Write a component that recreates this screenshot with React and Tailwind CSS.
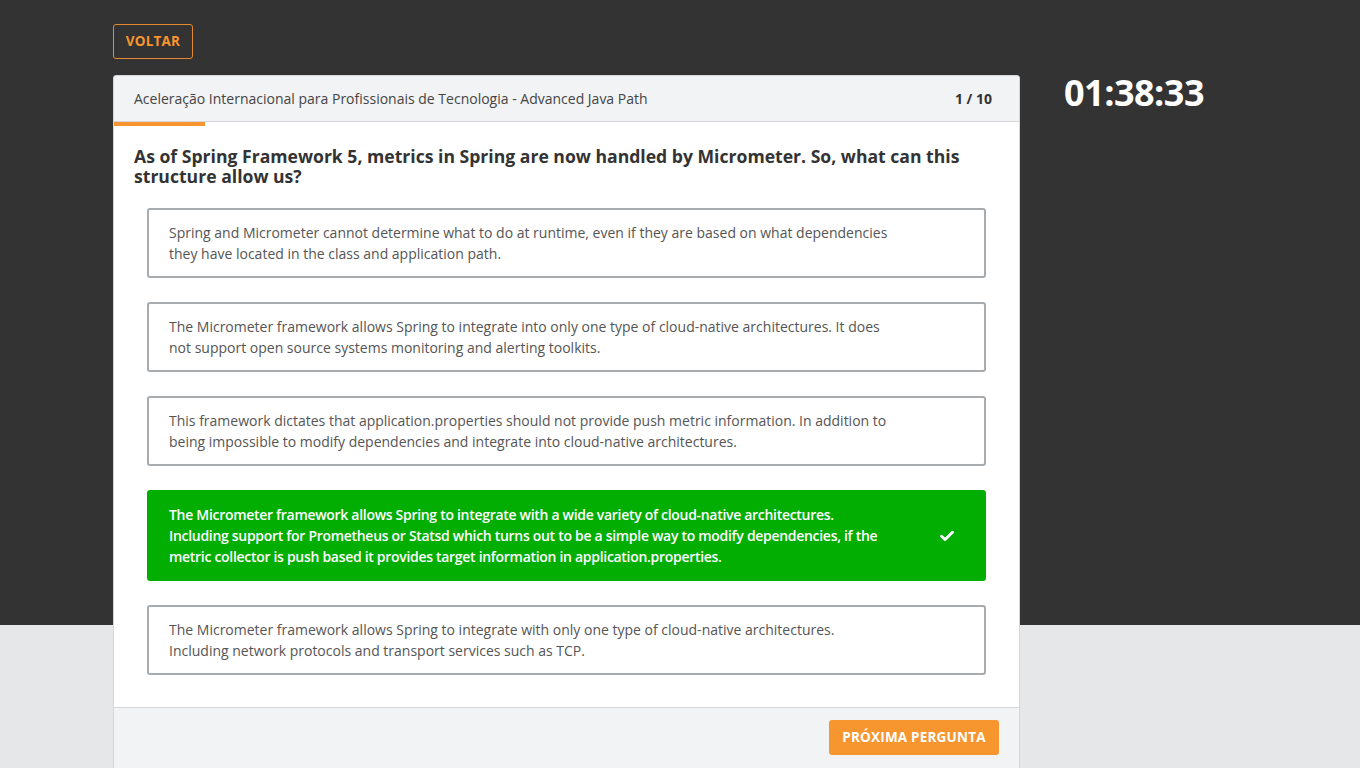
import React from "react";

const options = [
  {
    lines: [
      "Spring and Micrometer cannot determine what to do at runtime, even if they are based on what dependencies they have located in the class and application path.",
    ],
  },
  {
    lines: [
      "The Micrometer framework allows Spring to integrate into only one type of cloud-native architectures. It does not support open source systems monitoring and alerting toolkits.",
    ],
  },
  {
    lines: [
      "This framework dictates that application.properties should not provide push metric information. In addition to being impossible to modify dependencies and integrate into cloud-native architectures.",
    ],
  },
  {
    lines: [
      "The Micrometer framework allows Spring to integrate with a wide variety of cloud-native architectures.",
      "Including support for Prometheus or Statsd which turns out to be a simple way to modify dependencies, if the",
      "metric collector is push based it provides target information in application.properties.",
    ],
    correct: true,
  },
  {
    lines: [
      "The Micrometer framework allows Spring to integrate with only one type of cloud-native architectures. Including network protocols and transport services such as TCP.",
    ],
  },
];

function Check() {
  return (
    <svg width="14" height="12" viewBox="0 0 14 12" fill="none">
      <path d="M1.5 6.2 L5.2 9.6 L12.5 2.2" stroke="white" strokeWidth="2.8" strokeLinecap="round" strokeLinejoin="round" />
    </svg>
  );
}

export default function App() {
  return (
    <div
      className="relative w-[1360px] h-[768px] overflow-hidden bg-[#e6e7e9]"
      style={{ fontFamily: '"Open Sans", "Noto Sans", sans-serif' }}
    >
      <div className="absolute left-0 top-0 w-full h-[625px] bg-[#333333]" />
      <div className="relative pl-[113px] pt-[24px]">
        <button className="h-[35px] w-[80px] border border-[#e38b2d] rounded-[3px] text-[#f7952f] text-[13.5px] font-bold tracking-[0.2px]">
          VOLTAR
        </button>
        <div className="flex mt-[16px]">
          <div className="w-[907px] bg-white border border-[#d4d6d9] rounded-[3px] overflow-hidden">
            <div className="bg-[#f2f3f5] h-[46px] flex items-center justify-between pl-[20px] pr-[27px] border-b border-[#d4d6d9]">
              <span className="text-[14px] text-[#444]">
                Aceleração Internacional para Profissionais de Tecnologia - Advanced Java Path
              </span>
              <span className="text-[14px] font-bold text-[#333]">1 / 10</span>
            </div>
            <div className="h-[4px] w-[91px] bg-[#f7952f]" />
            <div className="px-[20px] pt-[20px]">
              <h2 className="text-[17.6px] leading-[20px] font-bold text-[#333]">
                As of Spring Framework 5, metrics in Spring are now handled by Micrometer. So, what can this
                <br />
                structure allow us?
              </h2>
              <div className="flex flex-col gap-[24px] mt-[22px] mx-[13px] pb-[32px]">
                {options.map((o, i) =>
                  o.correct ? (
                    <div
                      key={i}
                      className="flex items-center border-2 border-[#03ae03] bg-[#03ae03] rounded-[3px] py-[12px] pl-[20px]"
                    >
                      <p className="w-[725px] text-[14px] leading-[21px] font-semibold text-white tracking-[-0.3px] whitespace-nowrap">
                        {o.lines.map((l, j) => (
                          <span key={j} className="block">
                            {l}
                          </span>
                        ))}
                      </p>
                      <div className="flex-1 flex justify-center pl-[16px]">
                        <Check />
                      </div>
                    </div>
                  ) : (
                    <div
                      key={i}
                      className="flex items-center border-2 border-[#a8abae] bg-white rounded-[3px] py-[12px] pl-[20px]"
                    >
                      <p className="w-[725px] text-[14px] leading-[21px] text-[#555]">{o.lines[0]}</p>
                    </div>
                  )
                )}
              </div>
            </div>
            <div className="bg-[#f2f3f5] border-t border-[#d4d6d9] h-[80px] flex justify-end pr-[20px] pt-[12px]">
              <button className="h-[35px] w-[170px] bg-[#f7952f] rounded-[3px] text-white text-[13.5px] font-bold tracking-[0.2px]">
                PRÓXIMA PERGUNTA
              </button>
            </div>
          </div>
          <div className="ml-[44px] text-white text-[36px] font-bold leading-[36px] tracking-[-0.5px]">
            01:38:33
          </div>
        </div>
      </div>
    </div>
  );
}
